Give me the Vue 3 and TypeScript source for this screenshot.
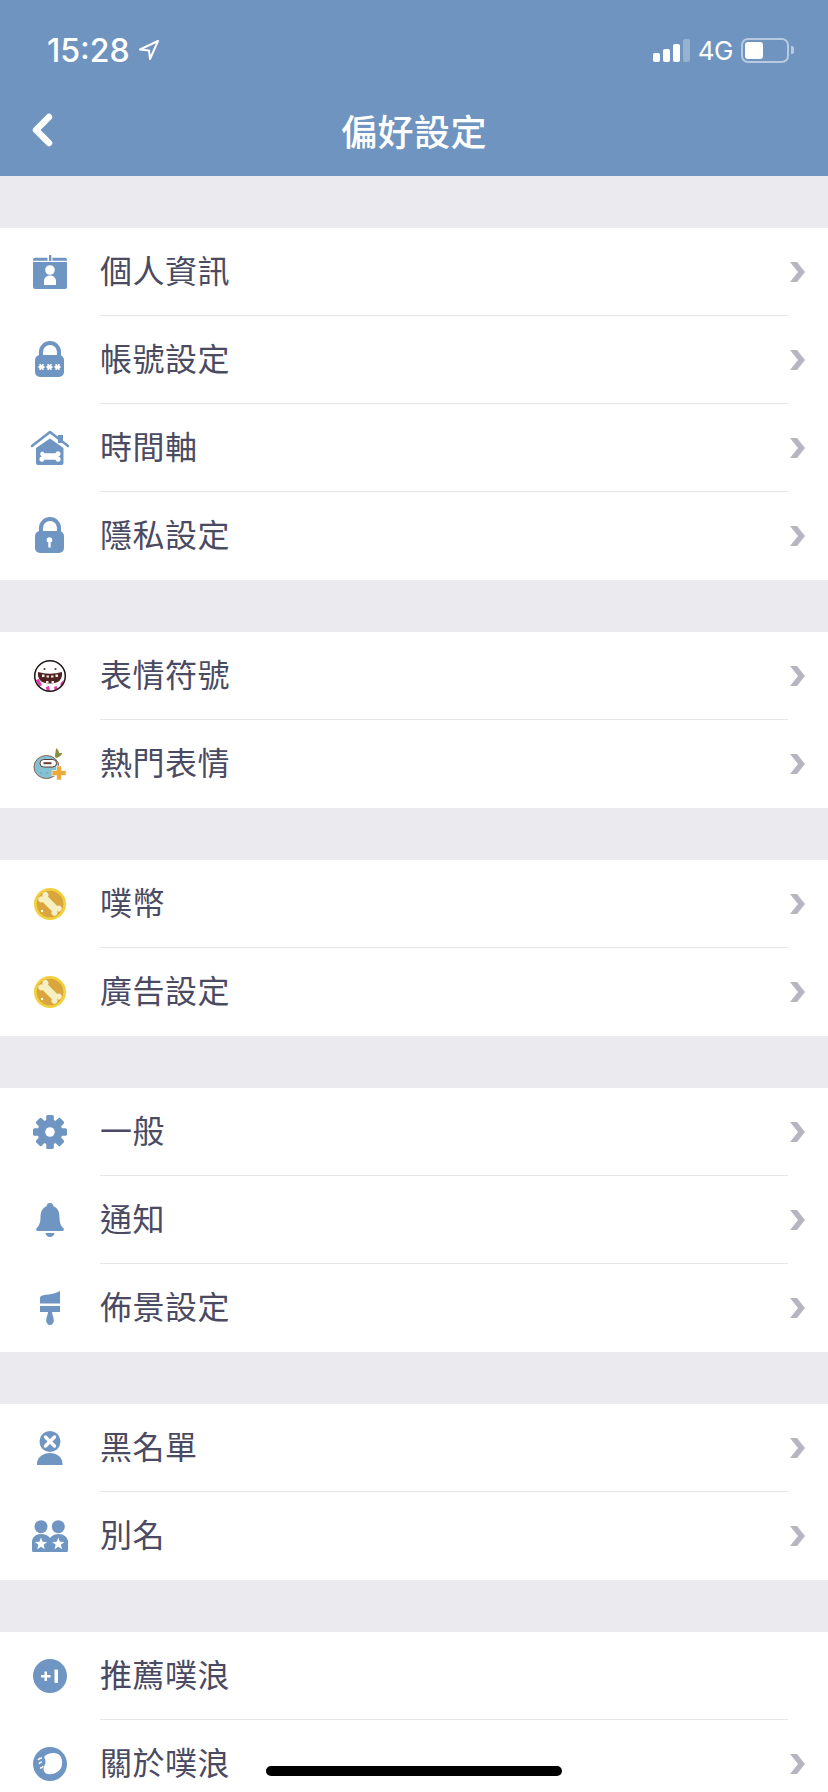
<template>
  <div class="page">
    <header class="top">
      <div class="status">
        <div class="status-left">
          <span class="time">15:28</span>
          <svg class="loc" width="22" height="22" viewBox="0 0 22 22">
            <path d="M20 2 L2 10.5 L11 11.5 L12 20 Z" fill="none" stroke="#fff" stroke-width="2" stroke-linejoin="round" />
          </svg>
        </div>
        <div class="status-right">
          <div class="signal">
            <i class="b1"></i><i class="b2"></i><i class="b3"></i><i class="b4"></i>
          </div>
          <span class="net">4G</span>
          <div class="battery"><div class="level"></div></div>
          <div class="nub"></div>
        </div>
      </div>
      <div class="nav">
        <svg class="back" width="24" height="34" viewBox="0 0 24 34">
          <path d="M19 4 L6 17 L19 30" fill="none" stroke="#fff" stroke-width="6.5" stroke-linecap="round" stroke-linejoin="round" />
        </svg>
        <span class="title">偏好設定</span>
      </div>
    </header>

    <section v-for="(group, gi) in groups" :key="gi" class="group">
      <div v-for="item in group" :key="item.label" class="row">
        <svg class="icon" width="40" height="40" viewBox="0 0 40 40">
          <template v-if="item.icon === 'card'">
            <rect x="19" y="3" width="2.400" height="6" fill="#6f95c2" />
            <path d="M3 8.700V7.700a2 2 0 0 1 2-2h12.500v3zM22.500 5.700H35a2 2 0 0 1 2 2v1H22.500z" fill="#6f95c2" />
            <path d="M3 10h34v25a2 2 0 0 1-2 2H5a2 2 0 0 1-2-2z" fill="#6f95c2" />
            <circle cx="20" cy="18" r="4.800" fill="#fff" />
            <path d="M14 33v-4c0-3.500 3-5.500 6-5.500s6 2 6 5.500v4z" fill="#fff" />
          </template>
          <template v-else-if="item.icon === 'lockstars'">
            <path d="M11 17v-5a9 9 0 0 1 18 0v5" fill="none" stroke="#6f95c2" stroke-width="4" />
            <rect x="5" y="15" width="29" height="22" rx="5" fill="#6f95c2" />
            <g fill="none" stroke="#fff" stroke-width="1.800">
              <path v-for="x in [11.5, 19.5, 27.5]" :key="x" :d="`M${x - 3} 27h6M${x - 1.8} 24.200l3.600 5.600M${x + 1.8} 24.200l-3.600 5.600`" />
            </g>
          </template>
          <template v-else-if="item.icon === 'home'">
            <path d="M28 7h5v8h-5z" fill="#6f95c2" />
            <path d="M2 18 L20 4 L38 18" fill="none" stroke="#6f95c2" stroke-width="2.500" stroke-linecap="round" stroke-linejoin="round" />
            <path d="M6 20 L20 10.500 L33.500 20 V35 a2 2 0 0 1 -2 2 H8 a2 2 0 0 1 -2 -2 Z" fill="#6f95c2" />
            <path d="M12 23.500a2.600 2.600 0 0 1 2.500 1.800h11a2.600 2.600 0 1 1 2.500 3.200 2.600 2.600 0 1 1-2.500 3.200h-11a2.600 2.600 0 1 1-2.500-3.200 2.600 2.600 0 0 1 0-5z" fill="#fff" />
          </template>
          <template v-else-if="item.icon === 'lock'">
            <path d="M11 17v-5a9 9 0 0 1 18 0v5" fill="none" stroke="#6f95c2" stroke-width="4" />
            <rect x="5" y="15" width="29" height="22" rx="5" fill="#6f95c2" />
            <circle cx="19.500" cy="24" r="2.800" fill="#fff" />
            <rect x="18.300" y="24" width="2.400" height="7.500" fill="#fff" />
          </template>
          <template v-else-if="item.icon === 'emoji'">
            <path d="M5.500 24l3.500-1 3 6-2.500 1.500zM16 31l3-1 1 5-3.500-.5zM24 31l2.500-1 1 3-3 1.500zM30.500 27l3.500-3-1.500 6-2 .5z" fill="#ec38b0" />
            <circle cx="20" cy="20" r="15.300" fill="none" stroke="#1c1414" stroke-width="1.500" />
            <circle cx="14.500" cy="13" r="1.100" fill="#5a3a34" />
            <circle cx="25.500" cy="13" r="1.100" fill="#5a3a34" />
            <path d="M8 16 Q20 19.500 32 16 Q33 27.500 20 27.500 Q7 27.500 8 16 Z" fill="#4e2322" />
            <path d="M12 18.500h2.500v2.500H12zM16.500 19.500h2.500v2H16.500zM21 19.500h2.500v2H21zM25.500 18.500H28v2.500h-2.500zM16 25h2.500v2H16zM21.500 25H24v2h-2.500z" fill="#efe9e6" />
          </template>
          <template v-else-if="item.icon === 'hot'">
            <path d="M25 13 C25 9 26 7 26 4 C28 6 29 7 29 9 L32 9 C32 11 29 13 27 14 Z" fill="#8d8a3a" />
            <ellipse cx="16.500" cy="23" rx="12.500" ry="11.500" fill="#83c2d2" stroke="#8a5f50" stroke-width="1" />
            <rect x="10" y="15.500" width="16.500" height="7.500" rx="3.700" fill="#fff" stroke="#5b3c36" stroke-width="1" />
            <rect x="13.500" y="18.200" width="8" height="2" fill="#6f3b35" />
            <circle cx="11" cy="29" r=".7" fill="#5d8f9b" />
            <circle cx="17" cy="29" r=".7" fill="#5d8f9b" />
            <path d="M26.500 22h5v4.500H36v5h-4.500V36h-5v-4.500H22v-5h4.500z" fill="#eaaa3c" stroke="#fff" stroke-width=".6" />
          </template>
          <template v-else-if="item.icon === 'coin'">
            <circle cx="20" cy="20" r="16" fill="#f2cf3c" />
            <circle cx="20" cy="20" r="13.300" fill="#d9a63d" />
            <g transform="rotate(45 20 20)">
              <path d="M10.500 15.800a3 3 0 0 1 3 2.400h13a3 3 0 1 1 3 3.800 3 3 0 1 1-3 3.800h-13a3 3 0 1 1-3-3.800 3 3 0 0 1 0-6.200z" transform="translate(0 -2)" fill="#f7efc4" />
            </g>
            <circle cx="12" cy="27" r="1.200" fill="#fff" />
          </template>
          <template v-else-if="item.icon === 'gear'">
            <g fill="#6f95c2">
              <rect v-for="a in [0, 45, 90, 135]" :key="a" x="16.200" y="3" width="7.600" height="34" rx="1.500" :transform="`rotate(${a} 20 20)`" />
              <circle cx="20" cy="20" r="12.500" />
            </g>
            <circle cx="20" cy="20" r="4.800" fill="#fff" />
          </template>
          <template v-else-if="item.icon === 'bell'">
            <path d="M20 3a3.500 3.500 0 0 1 3.400 3.200C28 8 29.500 12 29.500 17c0 6 1.500 9 3.800 11 1 1 .7 3-1 3H7.700c-1.700 0-2-2-1-3 2.300-2 3.800-5 3.800-11 0-5 1.500-9 6.100-10.800A3.500 3.500 0 0 1 20 3z" fill="#6f95c2" />
            <path d="M15.500 33h9c-.5 2.500-2.200 4-4.500 4s-4-1.500-4.500-4z" fill="#6f95c2" />
          </template>
          <template v-else-if="item.icon === 'brush'">
            <path d="M10 15.500 V10 C10 8 12 7.500 14 7 C20 6.500 26 5.500 30 3 V15.500 Z" fill="#6f95c2" />
            <rect x="10" y="18" width="20" height="6" fill="#6f95c2" />
            <path d="M18 24h4c0 3 1.800 5 1.800 8.500a3.800 4.500 0 0 1-7.600 0C16.200 29 18 27 18 24z" fill="#6f95c2" />
          </template>
          <template v-else-if="item.icon === 'block'">
            <circle cx="20" cy="13.500" r="10.500" fill="#6f95c2" />
            <path d="M15.500 9l9 9M24.500 9l-9 9" stroke="#fff" stroke-width="3.400" stroke-linecap="round" />
            <path d="M7 37v-1c0-7 6-11 13-11s12.500 4 12.500 11v1z" fill="#6f95c2" />
          </template>
          <template v-else-if="item.icon === 'alias'">
            <circle cx="11" cy="10.700" r="6.500" fill="#6f95c2" />
            <circle cx="28.300" cy="10.700" r="6.500" fill="#6f95c2" />
            <path d="M2 34.500V26c0-5 4-8 9-8 4 0 7 1.500 9 4 2-2.500 5-4 8.500-4 5 0 9.500 3 9.500 8v8.500a1.500 1.500 0 0 1-1.500 1.500h-33A1.500 1.500 0 0 1 2 34.500z" fill="#6f95c2" />
            <path v-for="x in [11, 28.3]" :key="x" :transform="`translate(${x} 28)`" d="M0-6.500 1.600-2.200 6.200-2 2.600.8 3.800 5.300 0 2.700-3.800 5.300-2.600.8-6.200-2-1.600-2.200z" fill="#fff" />
          </template>
          <template v-else-if="item.icon === 'plus'">
            <circle cx="20" cy="20" r="17" fill="#6f95c2" />
            <path d="M14.500 15.500h2.500v3.500h3.500v2.500H17V25h-2.500v-3.500H11V19h3.500z" fill="#fff" />
            <rect x="24.500" y="13.500" width="3.500" height="13.500" rx=".8" fill="#fff" />
          </template>
          <template v-else-if="item.icon === 'about'">
            <circle cx="20" cy="20" r="17" fill="#6f95c2" />
            <path d="M14 13 C17 9 24 8 28 10 C32 12 33 18 31.500 23 C29 29 21 31.500 16 29.500 C13.500 28 13 25 14 22 C16 20 16 16 14 13 Z" fill="#fff" />
            <path d="M8 16 a5 5 0 0 1 4 -2 M9 20 a3 3 0 0 1 3 -2 M10 24 a3 3 0 0 0 3 -2" fill="none" stroke="#fff" stroke-width="1.500" />
          </template>
        </svg>
        <div class="body" :class="{ last: item === group[group.length - 1] }">{{ item.label }}</div>
        <div class="more">
          <svg v-if="!item.noArrow" width="15" height="20" viewBox="0 0 15 20">
            <path d="M0 0h7l8 10-8 10H0l8-10z" fill="#b6b6c0" />
          </svg>
        </div>
      </div>
    </section>

    <div class="home-bar"></div>
  </div>
</template>

<script setup lang="ts">
interface Item {
  label: string;
  icon: string;
  noArrow?: boolean;
}

const groups: Item[][] = [
  [
    { label: '個人資訊', icon: 'card' },
    { label: '帳號設定', icon: 'lockstars' },
    { label: '時間軸', icon: 'home' },
    { label: '隱私設定', icon: 'lock' }
  ],
  [
    { label: '表情符號', icon: 'emoji' },
    { label: '熱門表情', icon: 'hot' }
  ],
  [
    { label: '噗幣', icon: 'coin' },
    { label: '廣告設定', icon: 'coin' }
  ],
  [
    { label: '一般', icon: 'gear' },
    { label: '通知', icon: 'bell' },
    { label: '佈景設定', icon: 'brush' }
  ],
  [
    { label: '黑名單', icon: 'block' },
    { label: '別名', icon: 'alias' }
  ],
  [
    { label: '推薦噗浪', icon: 'plus', noArrow: true },
    { label: '關於噗浪', icon: 'about' }
  ]
];
</script>

<style scoped>
.page {
  position: relative;
  width: 828px;
  height: 1792px;
  overflow: hidden;
  background: #ebeaef;
  font-family: "Noto Sans CJK TC", "Noto Sans", sans-serif;
}

.top {
  height: 176px;
  background: #6f94c0;
  color: #fff;
}

.status {
  height: 88px;
  display: flex;
  align-items: flex-start;
  justify-content: space-between;
  padding: 30px 34px 0 47px;
  box-sizing: border-box;
}

.status-left,
.status-right {
  display: flex;
  align-items: center;
  height: 40px;
}

.time {
  font-family: Inter, sans-serif;
  font-size: 32px;
  font-weight: 500;
}

.loc {
  margin-left: 8px;
}

.signal {
  display: flex;
  align-items: flex-end;
  gap: 3px;
  height: 23px;
}

.signal i {
  display: block;
  width: 7px;
  background: #fff;
  border-radius: 2px;
}

.signal .b1 { height: 9px; }
.signal .b2 { height: 13px; }
.signal .b3 { height: 18px; }
.signal .b4 { height: 23px; background: rgba(255, 255, 255, 0.28); }

.net {
  font-family: Inter, sans-serif;
  font-size: 26px;
  letter-spacing: -0.5px;
  margin-left: 8px;
}

.battery {
  width: 48px;
  height: 25px;
  margin-left: 8px;
  padding: 2px;
  box-sizing: border-box;
  border: 2px solid rgba(255, 255, 255, 0.5);
  border-radius: 7px;
}

.level {
  width: 18px;
  height: 17px;
  background: #fff;
  border-radius: 3px;
}

.nub {
  width: 3px;
  height: 8px;
  margin-left: 2px;
  background: rgba(255, 255, 255, 0.5);
  border-radius: 0 2px 2px 0;
}

.nav {
  position: relative;
  height: 88px;
  display: flex;
  align-items: center;
  justify-content: center;
}

.back {
  position: absolute;
  left: 30px;
  top: 25px;
}

.title {
  font-size: 36px;
  font-weight: 500;
  letter-spacing: 0.5px;
  line-height: 1;
  margin-top: -4px;
}

.group {
  margin-top: 52px;
  background: #fff;
}

.row {
  display: flex;
  align-items: center;
  height: 88px;
}

.icon {
  flex: none;
  margin: 0 30px;
}

.body {
  flex: 1;
  height: 88px;
  line-height: 82px;
  box-sizing: border-box;
  border-bottom: 1px solid #e6e6ea;
  font-size: 32px;
  letter-spacing: 0.5px;
  color: #4a4a62;
}

.body.last {
  border-bottom: none;
}

.more {
  flex: none;
  width: 40px;
  padding-left: 2px;
  box-sizing: border-box;
  display: flex;
  align-items: center;
}

.home-bar {
  position: absolute;
  left: 266px;
  top: 1766px;
  width: 296px;
  height: 10px;
  background: #000;
  border-radius: 5px;
}
</style>
